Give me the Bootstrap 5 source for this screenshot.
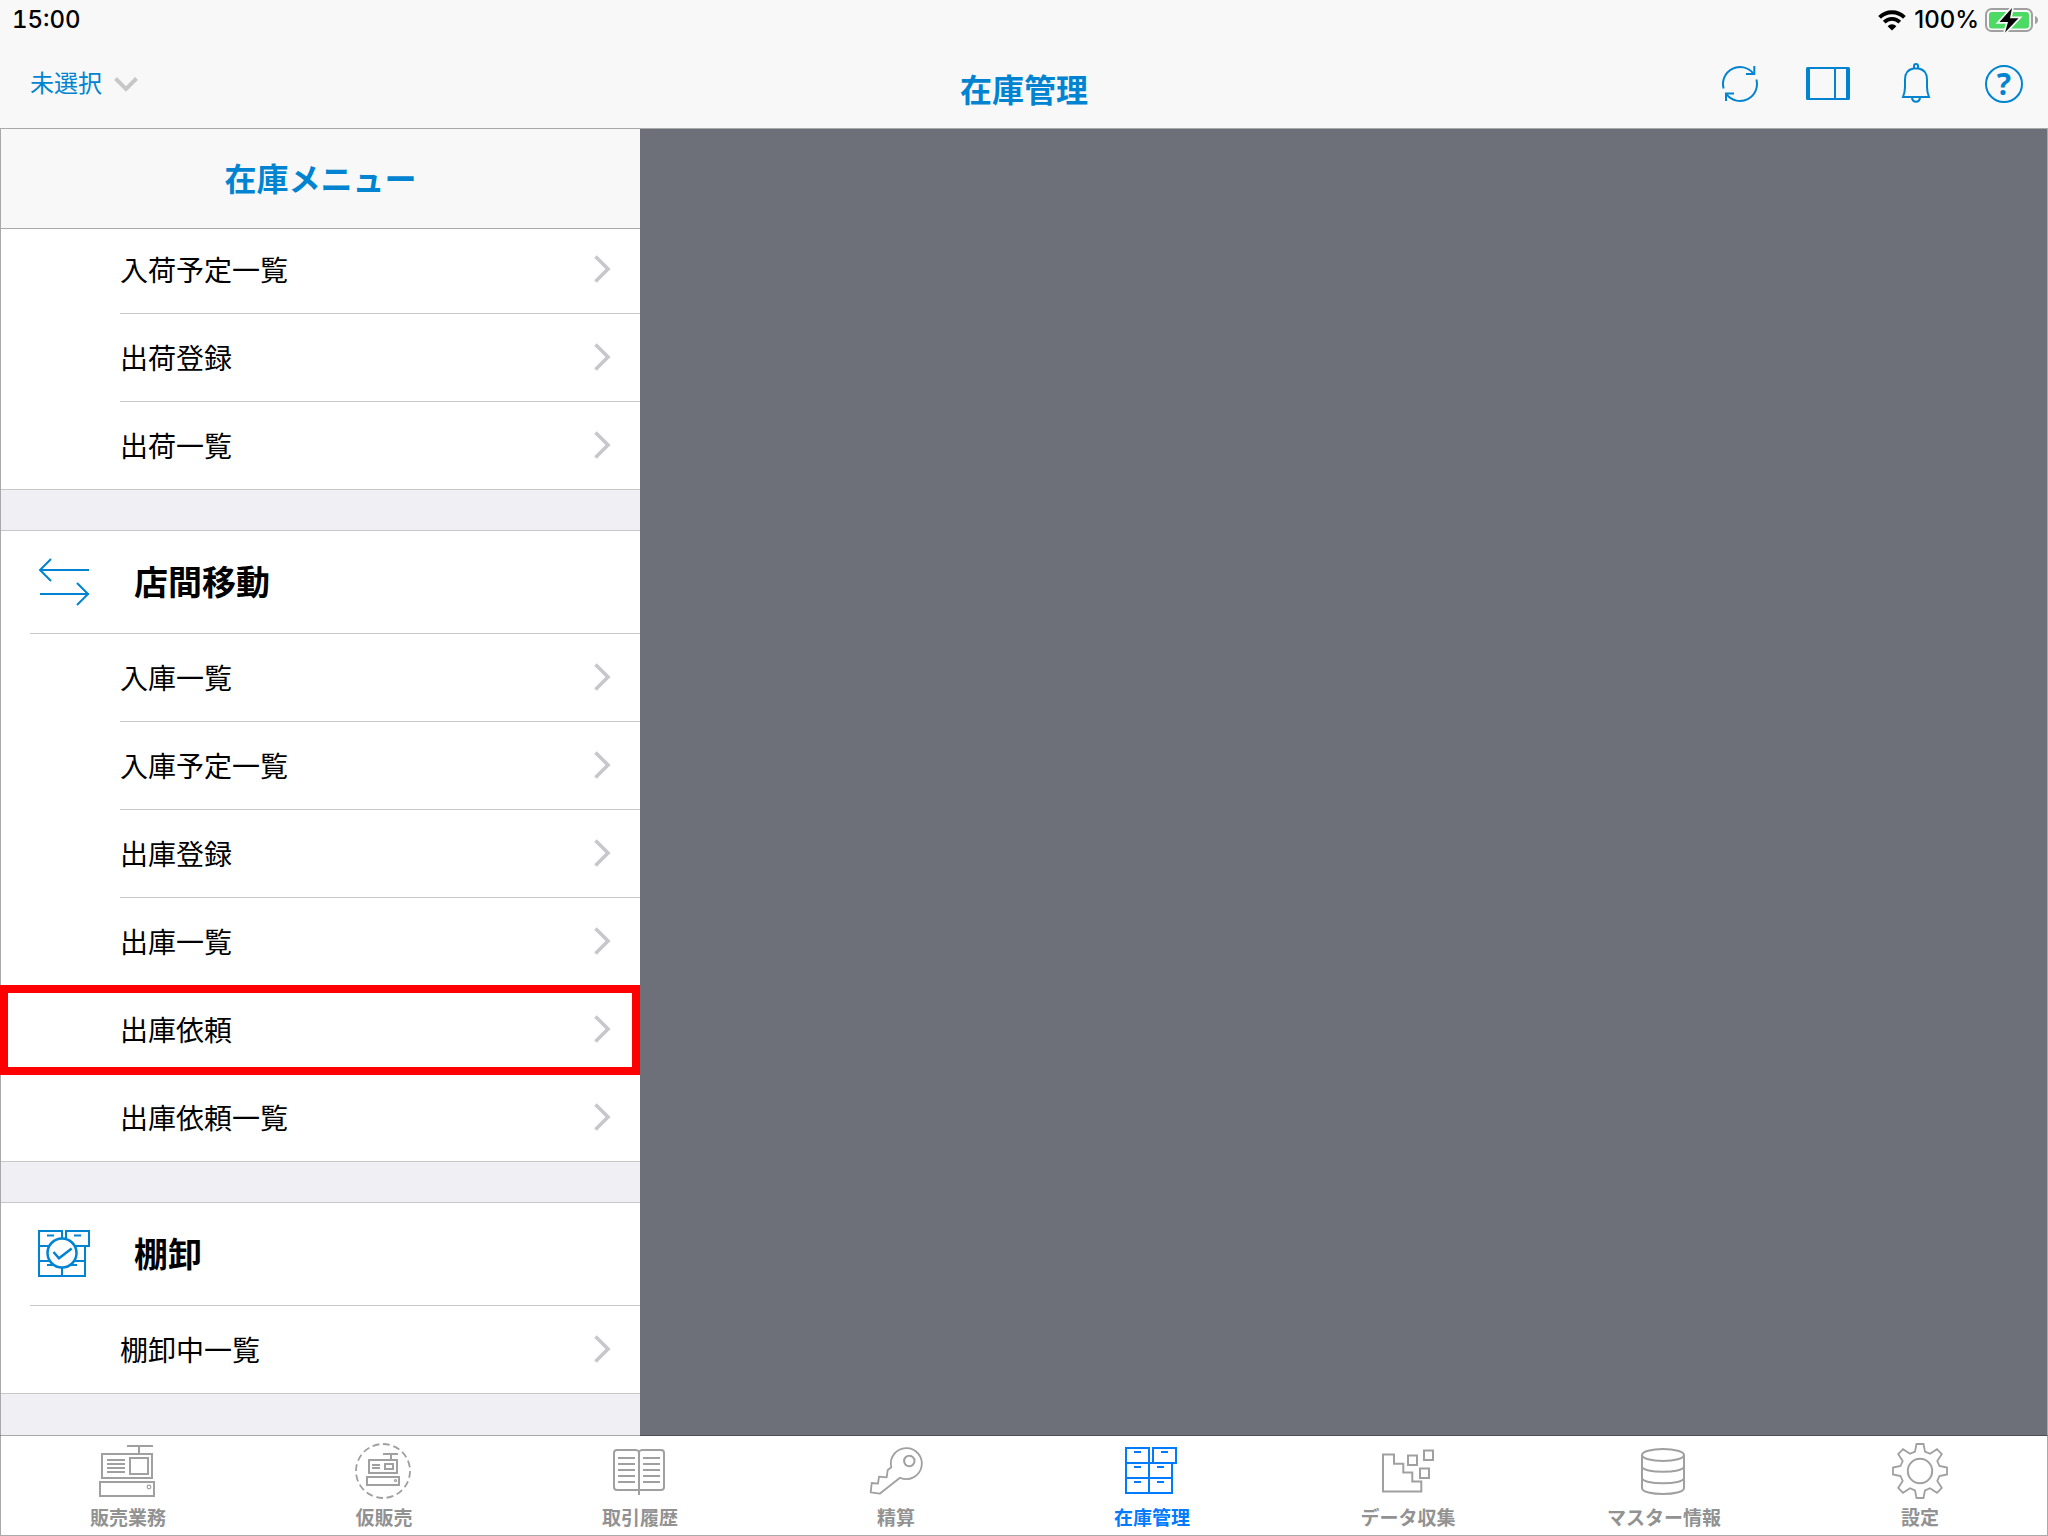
<!DOCTYPE html>
<html lang="ja">
<head>
<meta charset="utf-8">
<meta name="viewport" content="width=device-width, initial-scale=1">
<title>在庫管理</title>
<link href="https://cdn.jsdelivr.net/npm/bootstrap@5.3.0/dist/css/bootstrap.min.css" rel="stylesheet">
<style>
  :root { --brand: #0084d1; --active: #007aff; --bar: #f8f8f8; --edge: #a9a9ab; --sep: #c8c7cc; --muted: #929292; }
  body { font-family: "Noto Sans CJK JP", sans-serif; color: #000; background: #fff; }
  svg { display: block; flex: none; }
  .line-icon { fill: none; stroke: currentColor; stroke-width: 2; }
  .top-bar { background: var(--bar); border-bottom: 1px solid var(--edge); }
  .status-bar { height: 40px; padding: 0 8px 0 12px; font: 500 24px/40px Inter, "Liberation Sans", sans-serif; }
  .clock { font-variant-numeric: tabular-nums; }
  .status-icons { gap: 8px; }
  .battery-level { gap: 6px; }
  .title-bar { height: 88px; }
  .title-bar > * { flex: 1 1 0; }
  .store-picker { gap: 12px; }
  .store-picker select { appearance: none; border: 0; padding: 0 0 4px 30px; background: transparent; color: var(--brand); font-size: 24px; line-height: 36px; }
  .page-title { font-size: 32px; line-height: 40px; font-weight: 700; color: var(--brand); margin: 0; }
  .title-bar .page-title { padding-top: 8px; }
  .tool-btn { width: 88px; height: 88px; padding: 0; border: 0; background: none; color: var(--brand); display: flex; align-items: center; justify-content: center; }
  .help-ring { width: 38px; height: 38px; border: 2px solid currentColor; border-radius: 50%; font: 700 30px/34px "Open Sans", sans-serif; text-align: center; }
  .side-menu { width: 31.25%; background: #efeff4; border-left: 1px solid var(--edge); }
  .side-head { height: 100px; padding-bottom: 4px; background: var(--bar); border-bottom: 1px solid var(--edge); }
  .detail-pane { background: #6d7078; border-right: 1px solid var(--edge); }
  .menu-group { background: #fff; border-bottom: 1px solid var(--sep); }
  .menu-group + .menu-group { margin-top: 40px; border-top: 1px solid var(--sep); }
  .group-head { height: 103px; margin-left: 29px; padding-left: 6px; gap: 42px; border-bottom: 1px solid var(--sep); color: var(--brand); }
  .group-head h2 { margin: 0; padding-bottom: 2px; font-size: 34px; line-height: 44px; font-weight: 700; color: #000; }
  .menu-row { position: relative; padding-left: 119px; }
  .menu-row a { height: 88px; padding-right: 29px; padding-bottom: 2px; border-bottom: 1px solid var(--sep); font-size: 28px; line-height: 40px; color: #000; text-decoration: none; }
  .menu-row:last-child a { height: 87px; border-bottom: 0; }
  .menu-row.cut-top a { height: 85px; padding-bottom: 5px; }
  .menu-row svg { color: #c7c7cc; }
  .menu-row.picked::after { content: ""; position: absolute; inset: -1px 0 -1px -1px; border: 8px solid #f00; pointer-events: none; z-index: 1; }
  .tab-strip { position: relative; height: 101px; margin-top: -1px; border-top: 1px solid rgba(0, 0, 0, .3); border-bottom: 1px solid var(--edge); background: #fff; background-clip: padding-box; box-shadow: inset 1px 0 var(--edge), inset -1px 0 var(--edge); }
  .tab-strip a { flex: 1 1 0; color: var(--muted); font-size: 19px; line-height: 26px; font-weight: 700; text-decoration: none; padding-top: 4px; }
  .tab-strip svg { color: #a0a0a0; }
  .tab-strip a.active, .tab-strip a.active svg { color: var(--active); }
</style>
<script src="https://cdn.jsdelivr.net/npm/bootstrap@5.3.0/dist/js/bootstrap.bundle.min.js"></script>
</head>
<body class="d-flex flex-column min-vh-100">

<svg width="0" height="0" class="position-absolute" aria-hidden="true">
  <symbol id="chev" viewBox="0 0 18 28"><path d="M2.5 1.5 L15 14 L2.5 26.5" fill="none" stroke="currentColor" stroke-width="3.6"/></symbol>
</svg>

<header class="top-bar">
  <div class="status-bar d-flex align-items-center justify-content-between">
    <span class="clock">15:00</span>
    <div class="status-icons d-flex align-items-center">
      <svg width="28" height="21" viewBox="0 0 28 21" role="img" aria-label="Wi-Fi">
        <g fill="none" stroke="#000" stroke-width="3.8">
          <path d="M1.6 7.4 A17.5 17.5 0 0 1 26.4 7.4"/>
          <path d="M6.2 12.2 A11 11 0 0 1 21.8 12.2"/>
        </g>
        <path d="M9.6 16.2 A6.2 6.2 0 0 1 18.4 16.2 L14 20.6 Z"/>
      </svg>
      <div class="battery-level d-flex align-items-center">
        <span>100%</span>
        <svg width="55" height="26" viewBox="0 0 55 26" role="img" aria-label="充電中">
          <rect x="1" y="2" width="46" height="22" rx="5.5" fill="none" stroke="#a0a0a0" stroke-width="2"/>
          <path d="M50 9 Q53 10 53 13 Q53 16 50 17 Z" fill="#a0a0a0"/>
          <rect x="4" y="5" width="40" height="16.500" rx="3" fill="#4cd964"/>
          <path d="M27 1 L14.500 15 H23 L20 25.500 L33.500 11.300 H25 Z" fill="#000" stroke="#f8f8f8" stroke-width="3.500" paint-order="stroke"/>
        </svg>
      </div>
    </div>
  </div>
  <div class="title-bar d-flex align-items-center">
    <div class="store-picker d-flex align-items-center">
      <select aria-label="店舗"><option>未選択</option></select>
      <svg width="24" height="16" viewBox="0 0 24 16"><path d="M1.500 2.500 L12 13 L22.500 2.500" fill="none" stroke="#c7c7c7" stroke-width="4"/></svg>
    </div>
    <h1 class="page-title text-center">在庫管理</h1>
    <div class="d-flex justify-content-end">
      <button class="tool-btn" type="button" aria-label="更新">
        <svg class="line-icon" width="48" height="48" viewBox="0 0 48 48">
          <path d="M7.600 28.500 A17 17 0 0 1 37.200 13.300 M40.400 19.500 A17 17 0 0 1 10.800 34.700"/>
          <path d="M38.300 6 V14 H30 M10 41 V33.500 H18"/>
        </svg>
      </button>
      <button class="tool-btn" type="button" aria-label="パネル">
        <svg width="48" height="48" viewBox="0 0 48 48" fill="currentColor">
          <path fill-rule="evenodd" d="M3.500 7 H44.500 Q46 7 46 8.500 V38.500 Q46 40 44.500 40 H3.500 Q2 40 2 38.500 V8.500 Q2 7 3.500 7 Z M6 9 V38 H30 V9 Z M32 9 V38 H42 V9 Z"/>
        </svg>
      </button>
      <button class="tool-btn" type="button" aria-label="通知">
        <svg class="line-icon" width="48" height="48" viewBox="0 0 48 48">
          <path d="M11 37 Q13 32 13 27 V19.500 Q13 10 21.500 8.500 H26.500 Q35 10 35 19.500 V27 Q35 32 37 37 Z"/>
          <path d="M22 8.500 V6 Q22 4 24 4 Q26 4 26 6 V8.500 M19.800 37 Q20.500 41.800 24 41.800 Q27.500 41.800 28.200 37"/>
        </svg>
      </button>
      <button class="tool-btn" type="button" aria-label="ヘルプ"><span class="help-ring">?</span></button>
    </div>
  </div>
</header>

<main class="d-flex flex-fill">
  <nav class="side-menu" aria-label="在庫メニュー">
    <div class="side-head d-flex align-items-center justify-content-center"><h2 class="page-title">在庫メニュー</h2></div>
    <section class="menu-group">
      <ul class="list-unstyled m-0">
        <li class="menu-row cut-top"><a href="#" class="d-flex align-items-center justify-content-between">入荷予定一覧<svg width="18" height="28"><use href="#chev"/></svg></a></li>
        <li class="menu-row"><a href="#" class="d-flex align-items-center justify-content-between">出荷登録<svg width="18" height="28"><use href="#chev"/></svg></a></li>
        <li class="menu-row"><a href="#" class="d-flex align-items-center justify-content-between">出荷一覧<svg width="18" height="28"><use href="#chev"/></svg></a></li>
      </ul>
    </section>
    <section class="menu-group">
      <div class="group-head d-flex align-items-center">
        <svg class="line-icon" width="56" height="56" viewBox="0 0 56 56"><path d="M53 16 H4 M15 5 L4 16 L15 27 M4 40 H53 M41 29 L52 40 L41 51"/></svg>
        <h2>店間移動</h2>
      </div>
      <ul class="list-unstyled m-0">
        <li class="menu-row"><a href="#" class="d-flex align-items-center justify-content-between">入庫一覧<svg width="18" height="28"><use href="#chev"/></svg></a></li>
        <li class="menu-row"><a href="#" class="d-flex align-items-center justify-content-between">入庫予定一覧<svg width="18" height="28"><use href="#chev"/></svg></a></li>
        <li class="menu-row"><a href="#" class="d-flex align-items-center justify-content-between">出庫登録<svg width="18" height="28"><use href="#chev"/></svg></a></li>
        <li class="menu-row"><a href="#" class="d-flex align-items-center justify-content-between">出庫一覧<svg width="18" height="28"><use href="#chev"/></svg></a></li>
        <li class="menu-row picked"><a href="#" class="d-flex align-items-center justify-content-between">出庫依頼<svg width="18" height="28"><use href="#chev"/></svg></a></li>
        <li class="menu-row"><a href="#" class="d-flex align-items-center justify-content-between">出庫依頼一覧<svg width="18" height="28"><use href="#chev"/></svg></a></li>
      </ul>
    </section>
    <section class="menu-group">
      <div class="group-head d-flex align-items-center">
        <svg class="line-icon" width="56" height="56" viewBox="0 0 56 56">
          <path d="M3 5 H26 V20 H3 Z M30 5 H53 V20 H30 Z M3 20 V50 H49 V20 M3 35 H49 M26 5 V50 M11 39 H41"/>
          <path d="M11 9.500 H18 M38 9.500 H45"/>
          <circle cx="26" cy="27" r="14.500" fill="#fff" stroke-width="2.500"/>
          <path d="M17.500 26 L23 32.300 L35.700 22.500" stroke-width="2.500"/>
        </svg>
        <h2>棚卸</h2>
      </div>
      <ul class="list-unstyled m-0">
        <li class="menu-row"><a href="#" class="d-flex align-items-center justify-content-between">棚卸中一覧<svg width="18" height="28"><use href="#chev"/></svg></a></li>
      </ul>
    </section>
  </nav>
  <section class="detail-pane flex-fill" aria-label="詳細"></section>
</main>

<nav class="tab-strip d-flex" aria-label="メインメニュー">
  <a href="#" class="d-flex flex-column align-items-center">
    <svg class="line-icon" width="64" height="64" viewBox="0 0 64 64">
      <path d="M31 6 H57 M43 6 V14 M6 14 H56 V38 H6 Z M11 20 H29 M11 24 H29 M11 28 H29 M11 32 H29 M34 18 H52 V34 H34 Z M4 42 H58 V56 H4 Z"/>
      <circle cx="53" cy="47" r="1.800" stroke-width="1.200"/>
    </svg>販売業務</a>
  <a href="#" class="d-flex flex-column align-items-center">
    <svg class="line-icon" width="64" height="64" viewBox="0 0 64 64">
      <circle cx="31" cy="31" r="27" pathLength="160" stroke-dasharray="6.500 3.500" stroke-width="1.800"/>
      <path d="M31 14 H46 M39 14 V20 M17 20 H45 V33 H17 Z M20 25 H28 M20 28 H28 M33 24 H41 V29 H33 Z M15 37 H47 V45 H15 Z"/>
      <circle cx="43.500" cy="40.500" r="1" stroke-width="1.200"/>
    </svg>仮販売</a>
  <a href="#" class="d-flex flex-column align-items-center">
    <svg class="line-icon" width="64" height="64" viewBox="0 0 64 64">
      <path d="M31 12 Q30 10 28 10 H9 Q6 10 6 13 V47 Q6 50 9 50 H53 Q56 50 56 47 V13 Q56 10 53 10 H34 Q32 10 31 12 V55 M10 18 H27 M10 24 H27 M10 30 H27 M10 36 H27 M10 42 H27 M35 18 H52 M35 24 H52 M35 30 H52 M35 36 H52 M35 42 H52"/>
    </svg>取引履歴</a>
  <a href="#" class="d-flex flex-column align-items-center">
    <svg class="line-icon" width="64" height="64" viewBox="0 0 64 64" stroke-linejoin="round">
      <path stroke-width="1.800" d="M27.300 27.300 L23.700 30 L22.700 37.300 L15 36.700 L14 43.700 L7.700 43 L6.700 52.300 L15.700 53.700 L36 37.700 A15.500 15.500 0 1 0 27.300 27.300 Z"/>
      <circle cx="45.300" cy="21" r="5.200"/>
    </svg>精算</a>
  <a href="#" class="active d-flex flex-column align-items-center" aria-current="page">
    <svg class="line-icon" width="64" height="64" viewBox="0 0 64 64">
      <path d="M6 8 H29 V53 H6 Z M33 8 H56 V23 H33 Z M6 23 H52 V53 H29 M6 38 H52 M14 12 H21 M14 27 H21 M14 42 H21 M41 12 H48 M37 27 H44 M37 42 H44"/>
    </svg>在庫管理</a>
  <a href="#" class="d-flex flex-column align-items-center">
    <svg class="line-icon" width="64" height="64" viewBox="0 0 64 64">
      <path d="M7 14.500 H18 V23.700 H27.300 V32.500 H36.300 V41.500 H45.300 V51.500 H7 Z M32 15.500 H41 V25 H32 Z M48 10.500 H57 V20 H48 Z M44 28.500 H53 V38 H44 Z"/>
    </svg>データ収集</a>
  <a href="#" class="d-flex flex-column align-items-center">
    <svg class="line-icon" width="64" height="64" viewBox="0 0 64 64">
      <ellipse cx="31" cy="15" rx="21" ry="6"/>
      <path d="M10 15 V48 C10 56 52 56 52 48 V15 M10 26.500 C10 33.500 52 33.500 52 26.500 M10 38 C10 45 52 45 52 38"/>
    </svg>マスター情報</a>
  <a href="#" class="d-flex flex-column align-items-center">
    <svg class="line-icon" width="64" height="64" viewBox="0 0 64 64">
      <g transform="translate(32 31)">
        <path stroke-width="1.800" d="M-3.500 -27 H3.500 L5 -19.500 L10 -17.300 L17 -21.800 L21.800 -17 L17.300 -10 L19.500 -5 L27 -3.500 V3.500 L19.500 5 L17.300 10 L21.800 17 L17 21.800 L10 17.300 L5 19.500 L3.500 27 H-3.500 L-5 19.500 L-10 17.300 L-17 21.800 L-21.800 17 L-17.300 10 L-19.500 5 L-27 3.500 V-3.500 L-19.500 -5 L-17.300 -10 L-21.800 -17 L-17 -21.800 L-10 -17.300 L-5 -19.500 Z"/>
        <circle r="12.200"/>
      </g>
    </svg>設定</a>
</nav>
</body>
</html>
